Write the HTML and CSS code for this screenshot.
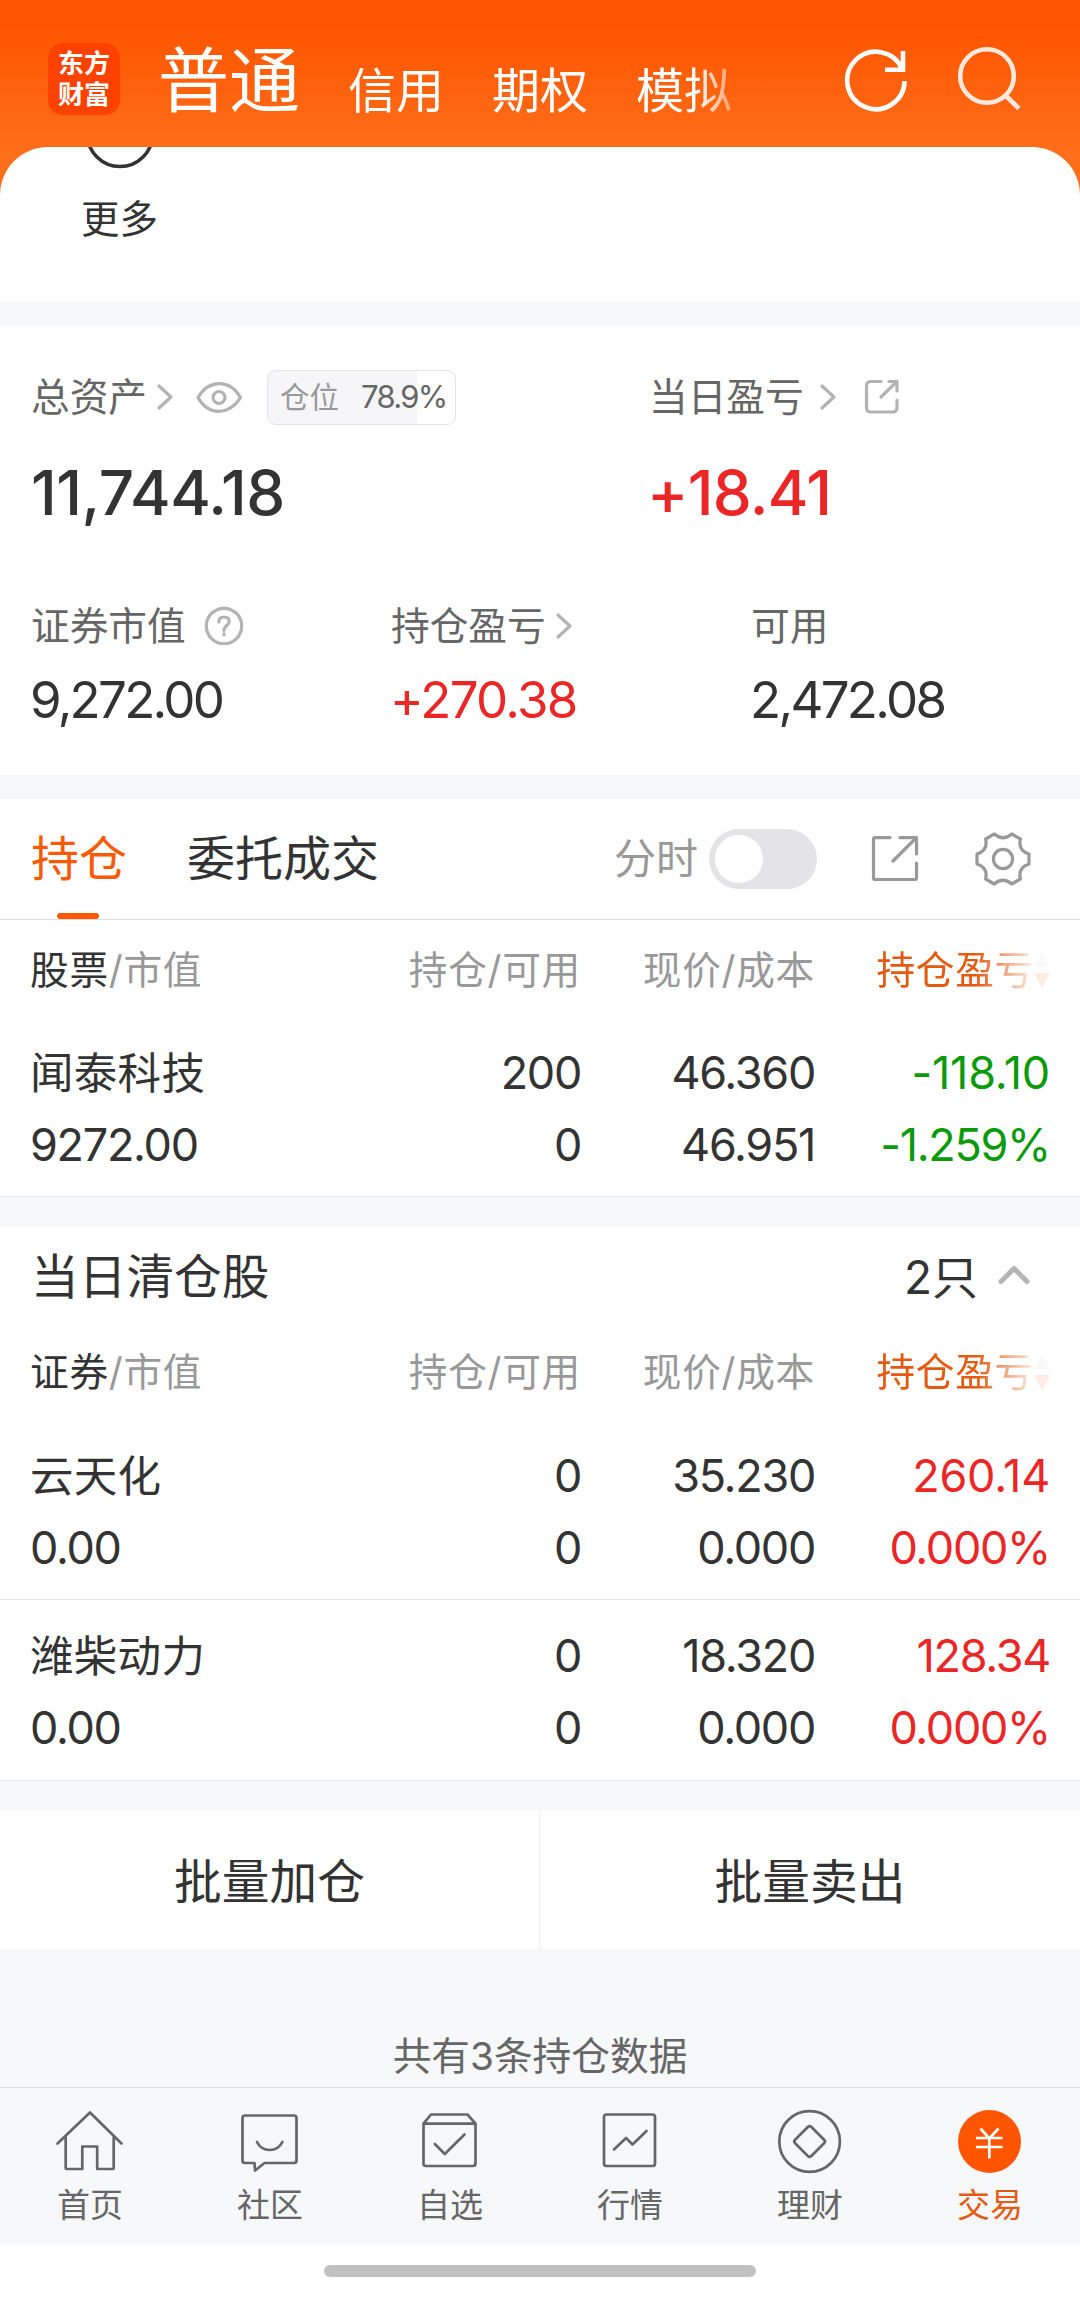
FILE: index.html
```html
<!DOCTYPE html>
<html lang="zh-CN">
<head>
<meta charset="utf-8">
<title>东方财富 - 交易</title>
<link rel="stylesheet" href="styles.css">
</head>
<body>
<div class="top">
  <header class="header">
    <div class="logo"><span>东方</span><span>财富</span></div>
    <nav class="modes">
      <span class="mode mode-active">普通</span>
      <span class="mode">信用</span>
      <span class="mode">期权</span>
      <span class="mode">模拟</span>
    </nav>
    <svg class="refresh" width="68" height="68" viewBox="842 46 68 68"><path d="M904.6 81A28.7 28.7 0 1 1 902 68.5M903 51V69.7H885"/></svg>
    <svg class="search" width="68" height="68" viewBox="954 42 68 68"><circle cx="987" cy="76" r="26.8"/><path d="M1006 96l13 12.5"/></svg>
  </header>
  <section class="more">
    <svg width="72" height="24" viewBox="84 147 72 24"><circle cx="120" cy="134" r="32.6"/></svg>
    <span>更多</span>
  </section>
</div>

<section class="assets">
  <div class="asset-head">
    <div class="label">总资产
      <svg class="chev" width="18" height="28" viewBox="0 0 18 28"><path d="M3 3l12 11-12 11"/></svg>
      <svg class="eye" width="48" height="34" viewBox="195 379 48 34"><path d="M198 396.5Q206 383 219 382.7T240.5 396.5Q232 410 219 410.3T198 396.5Z"/><circle cx="219" cy="396.5" r="6"/></svg>
      <div class="ratio"><span>仓位</span><b>78.9%</b></div>
    </div>
    <div class="label">当日盈亏
      <svg class="chev wide" width="18" height="28" viewBox="0 0 18 28"><path d="M3 3l12 11-12 11"/></svg>
      <svg class="share" width="38" height="38" viewBox="0 0 38 38"><path d="M18 3.5H8Q3.500 3.500 3.500 8V29.500Q3.500 34 8 34H29.500Q34 34 34 29.500V22M26 3.500H34V13M34 3.500L18 19"/></svg>
    </div>
  </div>
  <div class="asset-main">
    <div class="dark">11,744.18</div>
    <div class="red">+18.41</div>
  </div>
  <div class="asset-sub">
    <div>
      <div class="label">证券市值
        <svg class="help" width="40" height="40" viewBox="0 0 40 40"><circle cx="20" cy="20" r="17.700"/><path d="M14.800 16Q14.800 11 20 11T25.200 15.800C25.200 19.200 20 19.500 20 24.500"/><path d="M20 27.800v1"/></svg>
      </div>
      <div class="value">9,272.00</div>
    </div>
    <div>
      <div class="label">持仓盈亏
        <svg class="chev sub" width="18" height="28" viewBox="0 0 18 28"><path d="M3 3l12 11-12 11"/></svg>
      </div>
      <div class="value red">+270.38</div>
    </div>
    <div>
      <div class="label">可用</div>
      <div class="value">2,472.08</div>
    </div>
  </div>
</section>

<section class="tabs">
  <div class="tab active">持仓</div>
  <div class="tab">委托成交</div>
  <div class="minute">分时</div>
  <div class="switch"></div>
  <svg class="share-big" width="50" height="50" viewBox="869 834 50 50"><path d="M889 837.700H874Q872.500 837.700 872.500 839.200V878Q872.500 879.500 874 879.500H914Q915.500 879.500 915.500 878V863M899 837.700H915.500V854M915.500 837.700L892 861"/></svg>
  <svg class="gear" width="60" height="60" viewBox="-30 -30 60 60"><path d="M26 -5L26 5Q14.700 8.500 17.400 20L8.700 25Q0 17.500 -8.700 25L-17.400 20Q-14.700 8.500 -26 5L-26 -5Q-14.700 -8.500 -17.400 -20L-8.700 -25Q0 -17.500 8.700 -25L17.400 -20Q14.700 -8.500 26 -5Z"/><circle r="9.600"/></svg>
</section>

<section class="table">
  <div class="row head">
    <div><em>股票</em>/市值</div><div>持仓/可用</div><div>现价/成本</div>
    <div class="sort">持仓盈亏<svg width="16" height="36" viewBox="0 0 16 36"><path class="up" d="M8 1L16 15H0Z"/><path d="M8 36L16 21H0Z"/></svg></div>
  </div>
  <div class="stock">
    <div class="row"><div class="name">闻泰科技</div><div>200</div><div>46.360</div><div class="green loose">-118.10</div></div>
    <div class="row"><div>9272.00</div><div>0</div><div>46.951</div><div class="green">-1.259%</div></div>
  </div>
</section>

<section class="table cleared">
  <div class="title"><span>当日清仓股</span><span class="count">2只</span><svg width="34" height="22" viewBox="0 0 34 22"><path d="M4 17.500L17 4.500 30 17.500"/></svg></div>
  <div class="row head">
    <div><em>证券</em>/市值</div><div>持仓/可用</div><div>现价/成本</div>
    <div class="sort">持仓盈亏<svg width="16" height="36" viewBox="0 0 16 36"><path class="up" d="M8 1L16 15H0Z"/><path d="M8 36L16 21H0Z"/></svg></div>
  </div>
  <div class="stock">
    <div class="row"><div class="name">云天化</div><div>0</div><div>35.230</div><div class="red loose">260.14</div></div>
    <div class="row"><div>0.00</div><div>0</div><div>0.000</div><div class="red">0.000%</div></div>
  </div>
  <div class="stock">
    <div class="row"><div class="name">潍柴动力</div><div>0</div><div>18.320</div><div class="red">128.34</div></div>
    <div class="row"><div>0.00</div><div>0</div><div>0.000</div><div class="red">0.000%</div></div>
  </div>
</section>

<div class="batch"><div>批量加仓</div><div>批量卖出</div></div>
<div class="summary">共有3条持仓数据</div>

<nav class="bottom">
  <div class="item"><svg viewBox="54 2107 72 68"><path d="M57.500 2143.500L90 2112.500 121.500 2143.500M65.700 2137V2168Q65.700 2169 66.700 2169H82.300V2146.500H97.200V2169H112.700Q113.700 2169 113.700 2168V2137"/></svg>首页</div>
  <div class="item"><svg viewBox="234 2107 72 68"><path d="M254.500 2163H245Q242.500 2163 242.500 2160.500V2118Q242.500 2115.500 245 2115.500H294Q296.500 2115.500 296.500 2118V2160.500Q296.500 2163 294 2163H264.500L255 2170.500ZM257 2142Q261 2150 269.700 2150T282.400 2142"/></svg>社区</div>
  <div class="item"><svg viewBox="414 2107 72 68"><path d="M423.500 2123.700L431 2114.500H467.500L475.500 2123.700V2163.500Q475.500 2166 473 2166H426Q423.500 2166 423.500 2163.500ZH475.500M434.800 2144L444.800 2154 464.500 2134.500"/></svg>自选</div>
  <div class="item"><svg viewBox="594 2107 72 68"><rect x="604" y="2114.500" width="51" height="51.500" rx="2.500"/><path d="M614 2149.500L626 2138 632.500 2144.500 646.500 2131"/></svg>行情</div>
  <div class="item"><svg viewBox="774 2107 72 68"><circle cx="809.600" cy="2141.500" r="30.300"/><rect x="798.100" y="2130" width="23" height="23" rx="2.500" transform="rotate(45 809.600 2141.500)"/></svg>理财</div>
  <div class="item on"><svg viewBox="954 2107 72 68"><circle cx="989.500" cy="2141.500" r="31.500"/><path d="M980.500 2128.500L989.300 2138.500 998.500 2128.500M976 2138H1002.500M976 2147H1002.500M989.300 2138V2158.500"/></svg>交易</div>
</nav>
<div class="home-bar"><i></i></div>
</body>
</html>
```
FILE: styles.css
```css
* { box-sizing: border-box; }
body {
  margin: 0;
  width: 1080px;
  height: 2298px;
  overflow: hidden;
  display: flex;
  flex-direction: column;
  background: #f7f8fa;
  color: #333;
  font-family: Inter, "Noto Sans CJK SC", sans-serif;
}
body > * { flex-shrink: 0; }
svg { display: block; flex-shrink: 0; fill: none; stroke-linecap: round; stroke-linejoin: round; }
.red { color: #ea2626; }
.green { color: #0a9a0a; }

/* header */
.top { height: 302px; background: linear-gradient(#ff5500 25px, #ff6e1a 150px); }
.header { display: flex; height: 147px; padding-left: 48px; color: #fff; }
.logo {
  display: flex; flex-direction: column; align-items: center;
  width: 72px; height: 72px; margin-top: 43px; padding-top: 5px;
  border-radius: 15px; background: #ff4200;
  font-size: 26px; line-height: 31px; font-weight: 700;
}
.modes {
  display: flex; align-items: flex-start; gap: 48px;
  width: 645px; padding: 36px 0 0 38px;
  font-size: 48px; line-height: 88px; white-space: nowrap;
  -webkit-mask-image: linear-gradient(90deg, #000 575px, transparent 635px);
  mask-image: linear-gradient(90deg, #000 575px, transparent 635px);
}
.mode { margin-top: 11px; }
.mode-active { margin-top: 0; font-size: 71px; }
.header svg { stroke: #fff; stroke-width: 4.600; stroke-linecap: butt; stroke-linejoin: miter; }
.refresh { margin: 46px 0 0 77px; }
.search { margin: 42px 0 0 44px; opacity: .86; }
.more {
  height: 155px; padding-left: 84px;
  border-radius: 48px 48px 0 0; background: #fff;
  font-size: 38.500px; line-height: 50px;
}
.more svg { stroke: #333; stroke-width: 3.500; }
.more span { display: block; margin-top: 23px; margin-left: -3px; }

/* assets */
.assets { height: 449px; margin-top: 24px; padding: 44px 0 0 31px; background: #fff; }
.label { display: flex; align-items: center; height: 54px; font-size: 38.700px; line-height: 54px; color: #666; white-space: nowrap; }
.label svg { stroke: #b3b3b3; stroke-width: 3.200; }
.asset-head, .asset-main { display: grid; grid-template-columns: 618px 1fr; }
.chev { margin-left: 9px; }
.chev.wide { margin-left: 15px; }
.eye { margin-left: 21px; }
.share { margin-left: 26px; }
.ratio {
  display: flex; align-items: center; gap: 22px;
  width: 189px; height: 55px; margin-left: 24px; padding-left: 12px;
  border: 1px solid #e3e3e5; border-radius: 9px;
  background: linear-gradient(90deg, #f6f6f9 149px, #fff 149px);
  font-size: 29.500px; color: #999;
}
.ratio b { font-weight: 400; font-size: 31px; color: #666; letter-spacing: -1.700px; }
.asset-main { height: 62px; margin-top: 38px; font-size: 62px; line-height: 62px; font-weight: 500; letter-spacing: -.5px; }
.asset-main .red { margin-left: -2px; letter-spacing: -.7px; }
.asset-sub { display: grid; grid-template-columns: 360px 360px 1fr; margin-top: 75px; }
.help { margin-left: 18px; }
.chev.sub { margin-left: 9px; }
.value { margin: 20px 0 0 -1px; font-size: 51px; line-height: 54px; letter-spacing: -2.700px; }
.value.red { letter-spacing: -1.700px; }

/* tabs */
.tabs { display: flex; align-items: center; height: 121px; margin-top: 24px; padding-left: 31px; border-bottom: 1px solid #ddd; background: #fff; font-size: 48px; line-height: 122px; white-space: nowrap; }
.tabs > * { flex-shrink: 0; }
.tab { position: relative; margin-right: 60px; }
.active { color: #fa5a05; }
.active::after { content: ""; position: absolute; left: 26px; bottom: 1px; width: 42px; height: 6px; border-radius: 3px; background: #fa5a05; }
.minute { width: 86px; margin-left: 175px; font-size: 42px; color: #999; }
.switch { width: 108px; height: 60px; margin-left: 9px; border-radius: 30px; background: radial-gradient(circle at 30px 30px, #fff 23.500px, #e4e4e6 24.500px); }
.tabs svg { stroke: #999; stroke-width: 3.200; }
.share-big { margin-left: 53px; }
.gear { margin-left: 53px; }

/* holdings */
.table { padding-top: 12px; background: #fff; }
.row {
  display: grid; grid-template-columns: 270px 281px 234px 235px;
  height: 72px; padding-left: 30px;
  font-size: 45px; line-height: 72px; letter-spacing: -1.300px; text-align: right; white-space: nowrap;
}
.row > :first-child { text-align: left; }
.row .name { font-size: 43.500px; letter-spacing: .3px; }
.row .loose { letter-spacing: -.2px; }
.head { height: 76px; font-size: 38.700px; line-height: 76px; letter-spacing: .7px; color: #999; }
.head em { font-style: normal; color: #333; }
.sort {
  display: flex; justify-content: flex-end; align-items: center; color: #e35a10;
  -webkit-mask-image: linear-gradient(90deg, #000 160px, rgba(0,0,0,.12) 218px);
  mask-image: linear-gradient(90deg, #000 160px, rgba(0,0,0,.12) 218px);
}
.sort svg { fill: #fa5a05; }
.sort .up { fill: #ccc; }
.stock { height: 181px; padding-top: 20px; border-bottom: 1px solid #e9eaec; }
.table > .head + .stock { height: 189px; padding-top: 29px; }
.cleared { margin-top: 30px; padding-top: 0; }
.cleared > .head + .stock { height: 190px; padding-top: 30px; }
.title { display: flex; align-items: center; height: 107px; padding: 0 49px 7px 31px; font-size: 47.700px; line-height: 60px; }
.count { margin-left: auto; margin-right: 19px; font-size: 46px; }
.title svg { margin-bottom: 5px; stroke: #b5b5b5; stroke-width: 5; }

/* actions */
.batch { display: grid; grid-template-columns: 1fr 1fr; height: 139px; margin-top: 29px; background: #fff; font-size: 47.700px; line-height: 144px; text-align: center; }
.batch > :first-child { border-right: 1px solid #f0f0f2; }
.summary { height: 138px; padding-top: 77px; font-size: 38.700px; line-height: 60px; text-align: center; color: #666; }

/* bottom navigation */
.bottom { display: grid; grid-template-columns: repeat(6, 1fr); height: 157px; padding-top: 19px; border-top: 1px solid #dedfe1; }
.item { display: flex; flex-direction: column; align-items: center; gap: 10px; font-size: 33px; line-height: 40px; color: #666; }
.item svg { width: 72px; height: 68px; stroke: #666; stroke-width: 2.700; }
.on { color: #e35a10; }
.on svg { stroke: #fff; stroke-linecap: butt; }
.on circle { fill: #ff5500; stroke: none; }
.home-bar { height: 54px; padding-top: 21px; background: #fff; }
.home-bar i { display: block; width: 432px; height: 12px; margin: 0 auto; border-radius: 6px; background: #c1c1c1; }
```
